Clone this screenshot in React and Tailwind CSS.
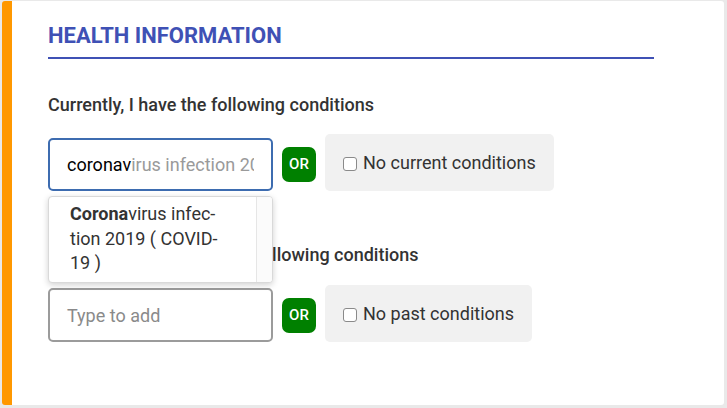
import React from "react";

const font = { fontFamily: "Roboto, 'Noto Sans', sans-serif" };

const CheckRow = ({ label }) => (
  <div className="ml-[9px] flex h-[57px] items-center gap-[6px] rounded-[5px] bg-[#f1f1f1] pl-[18px] pr-[18px]">
    <span className="mt-[3px] block h-[14px] w-[14px] rounded-[3px] border border-[#8a8a8a] bg-white" />
    <span className="text-[18px] text-[#333]">{label}</span>
  </div>
);

const OrBadge = () => (
  <div className="mb-[9px] ml-[9px] flex h-[35px] w-[34px] items-center justify-center rounded-[7px] bg-[#008000] text-[15px] font-medium text-white">
    OR
  </div>
);

const App = () => {
  return (
    <div
      className="h-[408px] w-[727px] bg-[#e9e9e9] pb-[3px] pl-[2px] pr-[3px] pt-px"
      style={font}
    >
      <div className="h-full rounded-[3px] border-l-[10px] border-[#ff9800] bg-white pl-[36px] pt-[22px]">
        {/* Heading */}
        <div className="w-[606px] border-b-2 border-[#3f51b5] pb-[8px]">
          <h2 className="text-[22px] font-bold leading-[26px] text-[#3f51b5]">
            HEALTH INFORMATION
          </h2>
        </div>

        {/* Current conditions */}
        <p className="mt-[34px] text-[18px] font-medium leading-[24px] text-[#333]">
          Currently, I have the following conditions
        </p>
        <div className="relative mt-[17px] flex items-end">
          <div className="relative">
            <div className="flex h-[53px] w-[225px] items-center overflow-hidden whitespace-nowrap rounded-[5px] border-2 border-[#3d6cb0] pl-[17px] pr-[17px] text-[18px]">
              <div className="flex w-full items-center overflow-hidden">
                <span className="text-black">coronav</span>
                <span className="h-[21px] w-px bg-black" />
                <span className="text-[#9a9a9a]">irus infection 2019</span>
              </div>
            </div>
            {/* Suggestions */}
            <div className="absolute left-0 top-[58px] z-10 flex h-[87px] w-[225px] overflow-hidden rounded-[4px] border border-[#d9d9d9] bg-white shadow-[0_2px_6px_rgba(0,0,0,0.18)]">
              <div className="flex-1 pl-[21px] pt-[5px] text-[18px] leading-[24.5px] text-[#333]">
                <b className="font-bold">Corona</b>virus infec-
                <br />
                tion 2019 ( COVID-
                <br />
                19 )
              </div>
              <div className="w-[16px] border-l border-[#e6e6e6] bg-[#fbfbfb]" />
            </div>
          </div>
          <OrBadge />
          <CheckRow label="No current conditions" />
        </div>

        {/* Past conditions */}
        <p className="mt-[52px] text-[18px] font-medium leading-[24px] text-[#333]">
          Previously, I have had the following conditions
        </p>
        <div className="mt-[18px] flex items-end">
          <div className="flex h-[54px] w-[225px] items-center rounded-[5px] border-2 border-[#9b9b9b] pl-[17px] text-[18px] text-[#8a8a8a]">
            Type to add
          </div>
          <OrBadge />
          <CheckRow label="No past conditions" />
        </div>
      </div>
    </div>
  );
};

export default App;
